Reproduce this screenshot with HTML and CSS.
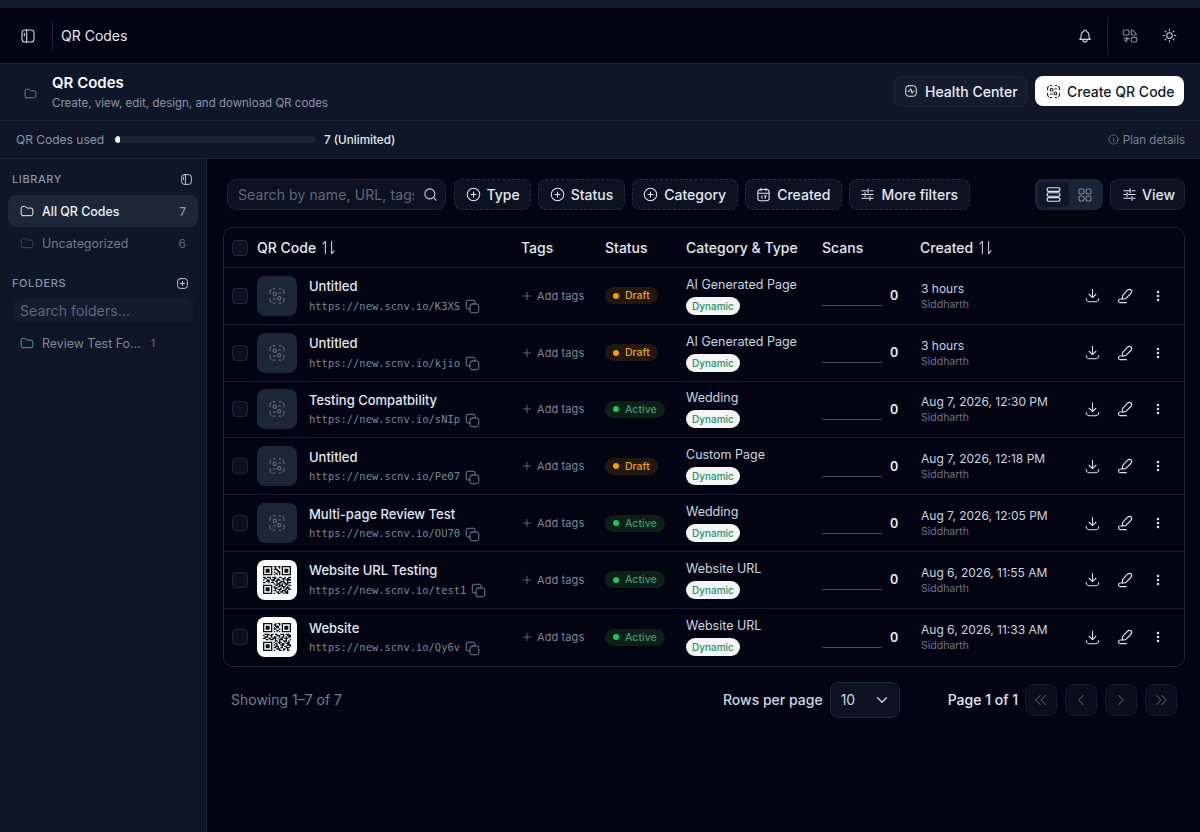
FILE: index.html
```html
<!DOCTYPE html>
<html lang="en">
<head>
<meta charset="utf-8">
<title>QR Codes</title>
<link rel="stylesheet" href="styles.css">
</head>
<body>
<svg class="defs" width="0" height="0" aria-hidden="true">
  <defs>
    <symbol id="i-panel" viewBox="0 0 24 24"><rect x="3" y="3" width="18" height="18" rx="5"/><path d="M10 3v18M6.500 8v4"/></symbol>
    <symbol id="i-folder" viewBox="0 0 24 24"><path d="M5 20h14a3 3 0 0 0 3-3V10a3 3 0 0 0-3-3h-7L9.600 4.600A2 2 0 0 0 8.200 4H5a3 3 0 0 0-3 3v10a3 3 0 0 0 3 3z"/></symbol>
    <symbol id="i-bell" viewBox="0 0 24 24"><path d="M10 5a2 2 0 1 1 4 0 7 7 0 0 1 4 6v3a4 4 0 0 0 2 3H4a4 4 0 0 0 2-3v-3a7 7 0 0 1 4-6"/><path d="M9 17v1a3 3 0 0 0 6 0v-1"/></symbol>
    <symbol id="i-lang" viewBox="0 0 24 24"><path d="M4 3h5a1.500 1.500 0 0 1 1.500 1.500V9A1.500 1.500 0 0 1 9 10.500H3.500A1.500 1.500 0 0 1 2 9V5a2 2 0 0 1 2-2z"/><path d="M14 3c3 .5 6 3 7.500 7.500H14z"/><path d="M7 13.500V21M3 15.500h8M4 19l6-3"/><rect x="14" y="14" width="8" height="7" rx="2"/></symbol>
    <symbol id="i-sun" viewBox="0 0 24 24"><circle cx="12" cy="12" r="4.500"/><path d="M12 2v2M12 20v2M4.900 4.900l1.400 1.400M17.700 17.700l1.400 1.400M2 12h2M20 12h2M4.900 19.100l1.400-1.400M17.700 6.300l1.400-1.400"/></symbol>
    <symbol id="i-pulse" viewBox="0 0 24 24"><rect x="3" y="3" width="18" height="18" rx="5"/><path d="M7 12.500h2.500l2-4.500 2.500 8 1.500-3.500H17"/></symbol>
    <symbol id="i-scan" viewBox="0 0 24 24"><path d="M2.500 9V7a4.500 4.500 0 0 1 1.500-3.300M7 2.500h2M15 2.500h2M20 3.700A4.500 4.500 0 0 1 21.500 7v2M21.500 15v2a4.500 4.500 0 0 1-1.500 3.300M17 21.500h-2M9 21.500H7M4 20.300A4.500 4.500 0 0 1 2.500 17v-2"/><circle cx="9" cy="9" r="2.200"/><circle cx="15" cy="15" r="2.200"/><path d="M14 8h3M7 16h3"/></symbol>
    <symbol id="i-plusc" viewBox="0 0 24 24"><circle cx="12" cy="12" r="10"/><path d="M12 8v8M8 12h8"/></symbol>
    <symbol id="i-plusb" viewBox="0 0 24 24"><rect x="3" y="3" width="18" height="18" rx="5"/><path d="M12 8v8M8 12h8"/></symbol>
    <symbol id="i-cal" viewBox="0 0 24 24"><rect x="3" y="4" width="18" height="18" rx="4"/><path d="M3 10h18M8 2v4M16 2v4M9.500 14v4M13.500 14h2.500l-1.500 4"/></symbol>
    <symbol id="i-sliders" viewBox="0 0 24 24"><path d="M3 6h9M16 6h5M3 12h3M10 12h11M3 18h11M18 18h3M13 3v6M8 9v6M16 15v6"/></symbol>
    <symbol id="i-search" viewBox="0 0 24 24"><circle cx="11" cy="11" r="8"/><path d="M21 21l-4.300-4.300"/></symbol>
    <symbol id="i-rows" viewBox="0 0 24 24"><rect x="3" y="2.500" width="18" height="5" rx="2"/><rect x="3" y="9.500" width="18" height="5" rx="2"/><rect x="3" y="16.500" width="18" height="5" rx="2"/></symbol>
    <symbol id="i-grid" viewBox="0 0 24 24"><rect x="3" y="3" width="7.500" height="7.500" rx="2.500"/><rect x="13.500" y="3" width="7.500" height="7.500" rx="2.500"/><rect x="3" y="13.500" width="7.500" height="7.500" rx="2.500"/><rect x="13.500" y="13.500" width="7.500" height="7.500" rx="2.500"/></symbol>
    <symbol id="i-sort" viewBox="0 0 24 24"><path d="M7 22V2L3 6.500M17 2v20l4-4.500"/></symbol>
    <symbol id="i-copy" viewBox="0 0 24 24"><rect x="8" y="8" width="14" height="14" rx="3.500"/><path d="M16 8V5a3 3 0 0 0-3-3H5a3 3 0 0 0-3 3v8a3 3 0 0 0 3 3h3"/></symbol>
    <symbol id="i-plus" viewBox="0 0 24 24"><path d="M12 3v18M3 12h18"/></symbol>
    <symbol id="i-download" viewBox="0 0 24 24"><path d="M12 2v13M6.500 10l5.500 5.500 5.500-5.500M2 17c0 2.500 2 5 4.500 5h11c2.500 0 4.500-2.500 4.500-5"/></symbol>
    <symbol id="i-sign" viewBox="0 0 24 24"><path d="M21.500 3c-2-1.500-4.500-1-6 .5L8.500 11 8 16.500l5-.5 7-7c1.500-1.500 2.500-4.500 1.500-6z"/><path d="M8 16.500H5c-3.700 0-3.700 5.500 0 5.500h9"/></symbol>
    <symbol id="i-dots" viewBox="0 0 24 24"><circle cx="12" cy="5" r="1"/><circle cx="12" cy="12" r="1"/><circle cx="12" cy="19" r="1"/></symbol>
    <symbol id="i-down" viewBox="0 0 24 24"><path d="M6 9l6 6 6-6"/></symbol>
    <symbol id="i-left" viewBox="0 0 24 24"><path d="M15 6l-6 6 6 6"/></symbol>
    <symbol id="i-right" viewBox="0 0 24 24"><path d="M9 6l6 6-6 6"/></symbol>
    <symbol id="i-dleft" viewBox="0 0 24 24"><path d="M11 6l-6 6 6 6M18 6l-6 6 6 6"/></symbol>
    <symbol id="i-dright" viewBox="0 0 24 24"><path d="M6 6l6 6-6 6M13 6l6 6-6 6"/></symbol>
    <symbol id="i-info" viewBox="0 0 24 24"><circle cx="12" cy="12" r="10"/><path d="M12 16v-5M12 8h.01"/></symbol>
    <symbol id="qr-a" viewBox="0 0 21 21"><path class="qr-fill" fill-rule="evenodd" d="M0 0h7v7H0zM1 1v5h5V1zM2 2h3v3H2zM14 0h7v7h-7zM15 1v5h5V1zM16 2h3v3h-3zM0 14h7v7H0zM1 15v5h5v-5zM2 16h3v3H2z"/><path class="qr-line" d="M8 .5h2M11 .5h2M9 1.500h1M12 1.500h1M8 2.500h3M10 3.500h2M8 4.500h1M11 4.500h2M9 5.500h2M12 5.500h1M8 6.500h1M10 6.500h1M12 6.500h1M0 8.500h2M3 8.500h3M7 8.500h3M12 8.500h2M16 8.500h1M19 8.500h2M1 9.500h2M5 9.500h1M8 9.500h2M11 9.500h1M14 9.500h3M18 9.500h2M0 10.500h1M3 10.500h2M6 10.500h3M10 10.500h3M15 10.500h1M17 10.500h4M2 11.500h3M7 11.500h1M9 11.500h2M13 11.500h3M18 11.500h1M0 12.500h2M4 12.500h1M6 12.500h2M10 12.500h1M12 12.500h2M15 12.500h2M18 12.500h3M8 13.500h1M10 13.500h3M14 13.500h1M16 13.500h3M9 14.500h2M12 14.500h3M17 14.500h1M19 14.500h2M8 15.500h1M11 15.500h2M14 15.500h3M18 15.500h1M8 16.500h3M13 16.500h1M15 16.500h1M17 16.500h3M9 17.500h1M11 17.500h3M16 17.500h2M19 17.500h2M8 18.500h2M12 18.500h1M14 18.500h3M18 18.500h1M10 19.500h2M13 19.500h2M16 19.500h3M8 20.500h1M11 20.500h2M15 20.500h1M17 20.500h2"/></symbol>
    <symbol id="qr-b" viewBox="0 0 21 21"><path class="qr-fill" fill-rule="evenodd" d="M0 0h7v7H0zM1 1v5h5V1zM2 2h3v3H2zM14 0h7v7h-7zM15 1v5h5V1zM16 2h3v3h-3zM0 14h7v7H0zM1 15v5h5v-5zM2 16h3v3H2z"/><path class="qr-line" d="M9 .5h1M11 .5h2M8 1.500h2M12 1.500h1M9 2.500h3M8 3.500h1M10 3.500h2M8 4.500h2M12 4.500h1M10 5.500h2M8 6.500h1M10 6.500h1M12 6.500h1M1 8.500h4M6 8.500h2M9 8.500h2M13 8.500h3M17 8.500h3M0 9.500h1M3 9.500h1M5 9.500h2M10 9.500h3M15 9.500h1M18 9.500h3M1 10.500h3M6 10.500h1M8 10.500h2M12 10.500h1M14 10.500h2M17 10.500h1M19 10.500h2M0 11.500h2M4 11.500h2M7 11.500h3M11 11.500h1M13 11.500h2M16 11.500h3M2 12.500h2M5 12.500h3M9 12.500h1M12 12.500h3M17 12.500h1M20 12.500h1M9 13.500h2M12 13.500h1M15 13.500h3M19 13.500h1M8 14.500h1M11 14.500h3M16 14.500h1M18 14.500h2M9 15.500h2M12 15.500h1M14 15.500h2M17 15.500h3M8 16.500h1M10 16.500h1M13 16.500h3M18 16.500h3M9 17.500h3M14 17.500h1M16 17.500h2M20 17.500h1M8 18.500h2M11 18.500h1M13 18.500h2M17 18.500h3M10 19.500h3M15 19.500h2M18 19.500h1M8 20.500h1M12 20.500h2M15 20.500h1M18 20.500h2"/></symbol>
  </defs>
</svg>

<div class="app">
  <div class="strip"></div>
  <header class="topbar">
    <div class="topbar-left">
      <svg class="ic ic-16 c-soft"><use href="#i-panel"/></svg>
      <span class="vdiv"></span>
      <span class="crumb">QR Codes</span>
    </div>
    <div class="topbar-right">
      <svg class="ic ic-16 c-soft"><use href="#i-bell"/></svg>
      <span class="vdiv"></span>
      <svg class="ic ic-16 c-mid"><use href="#i-lang"/></svg>
      <svg class="ic ic-15 c-soft"><use href="#i-sun"/></svg>
    </div>
  </header>

  <section class="pagehead">
    <div class="pagehead-left">
      <svg class="ic ic-13 c-mid"><use href="#i-folder"/></svg>
      <div class="titles">
        <h1>QR Codes</h1>
        <p>Create, view, edit, design, and download QR codes</p>
      </div>
    </div>
    <div class="pagehead-right">
      <button class="btn btn-ghost"><svg class="ic ic-14"><use href="#i-pulse"/></svg>Health Center</button>
      <button class="btn btn-primary"><svg class="ic ic-15"><use href="#i-scan"/></svg>Create QR Code</button>
    </div>
  </section>

  <section class="usage">
    <div class="usage-left">
      <span class="usage-label">QR Codes used</span>
      <div class="meter"><div class="meter-fill"></div></div>
      <span class="usage-val">7 (Unlimited)</span>
    </div>
    <span class="plan"><svg class="ic ic-11"><use href="#i-info"/></svg>Plan details</span>
  </section>

  <div class="body">
    <aside class="sidebar">
      <div class="side-head"><span>LIBRARY</span><svg class="ic ic-13 c-soft"><use href="#i-panel"/></svg></div>
      <div class="side-item active"><svg class="ic ic-14"><use href="#i-folder"/></svg><span class="side-name">All QR Codes</span><span class="side-count">7</span></div>
      <div class="side-item muted"><svg class="ic ic-14"><use href="#i-folder"/></svg><span class="side-name">Uncategorized</span><span class="side-count">6</span></div>
      <div class="side-head side-head-2"><span>FOLDERS</span><svg class="ic ic-13 c-soft"><use href="#i-plusb"/></svg></div>
      <div class="side-search">Search folders...</div>
      <div class="side-item folder"><svg class="ic ic-14 c-teal"><use href="#i-folder"/></svg><span class="side-name">Review Test Fo...</span><span class="side-num">1</span></div>
    </aside>

    <main class="main">
      <div class="toolbar">
        <div class="search"><input class="search-input" type="text" placeholder="Search by name, URL, tags"><svg class="ic ic-15 c-soft"><use href="#i-search"/></svg></div>
        <button class="filter"><svg class="ic ic-15"><use href="#i-plusc"/></svg>Type</button>
        <button class="filter"><svg class="ic ic-15"><use href="#i-plusc"/></svg>Status</button>
        <button class="filter"><svg class="ic ic-15"><use href="#i-plusc"/></svg>Category</button>
        <button class="filter"><svg class="ic ic-15"><use href="#i-cal"/></svg>Created</button>
        <button class="filter"><svg class="ic ic-15"><use href="#i-sliders"/></svg>More filters</button>
        <div class="toolbar-right">
          <div class="toggle">
            <span class="toggle-on"><svg class="ic ic-17"><use href="#i-rows"/></svg></span>
            <span class="toggle-off"><svg class="ic ic-16"><use href="#i-grid"/></svg></span>
          </div>
          <button class="view"><svg class="ic ic-15"><use href="#i-sliders"/></svg>View</button>
        </div>
      </div>

      <div class="table">
        <div class="row head">
          <div class="cell-cb"><span class="cb cb-head"></span></div>
          <div class="th">QR Code<svg class="ic ic-15"><use href="#i-sort"/></svg></div>
          <div class="th">Tags</div>
          <div class="th">Status</div>
          <div class="th">Category &amp; Type</div>
          <div class="th">Scans</div>
          <div class="th">Created<svg class="ic ic-15"><use href="#i-sort"/></svg></div>
          <div></div>
        </div>

        <div class="row">
          <div class="cell-cb"><span class="cb"></span></div>
          <div class="qr-cell"><span class="thumb"><svg class="ic ic-18"><use href="#i-scan"/></svg></span><div class="qr-text"><div class="name">Untitled</div><div class="url"><span>https://new.scnv.io/K3XS</span><svg class="ic ic-15 c-mid"><use href="#i-copy"/></svg></div></div></div>
          <div class="tags"><svg class="ic ic-10"><use href="#i-plus"/></svg>Add tags</div>
          <div><span class="pill draft"><i></i>Draft</span></div>
          <div class="cat"><div>AI Generated Page</div><span class="dyn">Dynamic</span></div>
          <div class="scans"><span class="spark"></span><b>0</b></div>
          <div class="created"><div>3 hours</div><small>Siddharth</small></div>
          <div class="actions"><svg class="ic ic-15"><use href="#i-download"/></svg><svg class="ic ic-16"><use href="#i-sign"/></svg><svg class="ic ic-14"><use href="#i-dots"/></svg></div>
        </div>

        <div class="row">
          <div class="cell-cb"><span class="cb"></span></div>
          <div class="qr-cell"><span class="thumb"><svg class="ic ic-18"><use href="#i-scan"/></svg></span><div class="qr-text"><div class="name">Untitled</div><div class="url"><span>https://new.scnv.io/kjio</span><svg class="ic ic-15 c-mid"><use href="#i-copy"/></svg></div></div></div>
          <div class="tags"><svg class="ic ic-10"><use href="#i-plus"/></svg>Add tags</div>
          <div><span class="pill draft"><i></i>Draft</span></div>
          <div class="cat"><div>AI Generated Page</div><span class="dyn">Dynamic</span></div>
          <div class="scans"><span class="spark"></span><b>0</b></div>
          <div class="created"><div>3 hours</div><small>Siddharth</small></div>
          <div class="actions"><svg class="ic ic-15"><use href="#i-download"/></svg><svg class="ic ic-16"><use href="#i-sign"/></svg><svg class="ic ic-14"><use href="#i-dots"/></svg></div>
        </div>

        <div class="row">
          <div class="cell-cb"><span class="cb"></span></div>
          <div class="qr-cell"><span class="thumb"><svg class="ic ic-18"><use href="#i-scan"/></svg></span><div class="qr-text"><div class="name">Testing Compatbility</div><div class="url"><span>https://new.scnv.io/sNIp</span><svg class="ic ic-15 c-mid"><use href="#i-copy"/></svg></div></div></div>
          <div class="tags"><svg class="ic ic-10"><use href="#i-plus"/></svg>Add tags</div>
          <div><span class="pill active-pill"><i></i>Active</span></div>
          <div class="cat"><div>Wedding</div><span class="dyn">Dynamic</span></div>
          <div class="scans"><span class="spark"></span><b>0</b></div>
          <div class="created"><div>Aug 7, 2026, 12:30 PM</div><small>Siddharth</small></div>
          <div class="actions"><svg class="ic ic-15"><use href="#i-download"/></svg><svg class="ic ic-16"><use href="#i-sign"/></svg><svg class="ic ic-14"><use href="#i-dots"/></svg></div>
        </div>

        <div class="row">
          <div class="cell-cb"><span class="cb"></span></div>
          <div class="qr-cell"><span class="thumb"><svg class="ic ic-18"><use href="#i-scan"/></svg></span><div class="qr-text"><div class="name">Untitled</div><div class="url"><span>https://new.scnv.io/Pe07</span><svg class="ic ic-15 c-mid"><use href="#i-copy"/></svg></div></div></div>
          <div class="tags"><svg class="ic ic-10"><use href="#i-plus"/></svg>Add tags</div>
          <div><span class="pill draft"><i></i>Draft</span></div>
          <div class="cat"><div>Custom Page</div><span class="dyn">Dynamic</span></div>
          <div class="scans"><span class="spark"></span><b>0</b></div>
          <div class="created"><div>Aug 7, 2026, 12:18 PM</div><small>Siddharth</small></div>
          <div class="actions"><svg class="ic ic-15"><use href="#i-download"/></svg><svg class="ic ic-16"><use href="#i-sign"/></svg><svg class="ic ic-14"><use href="#i-dots"/></svg></div>
        </div>

        <div class="row">
          <div class="cell-cb"><span class="cb"></span></div>
          <div class="qr-cell"><span class="thumb"><svg class="ic ic-18"><use href="#i-scan"/></svg></span><div class="qr-text"><div class="name">Multi-page Review Test</div><div class="url"><span>https://new.scnv.io/OU70</span><svg class="ic ic-15 c-mid"><use href="#i-copy"/></svg></div></div></div>
          <div class="tags"><svg class="ic ic-10"><use href="#i-plus"/></svg>Add tags</div>
          <div><span class="pill active-pill"><i></i>Active</span></div>
          <div class="cat"><div>Wedding</div><span class="dyn">Dynamic</span></div>
          <div class="scans"><span class="spark"></span><b>0</b></div>
          <div class="created"><div>Aug 7, 2026, 12:05 PM</div><small>Siddharth</small></div>
          <div class="actions"><svg class="ic ic-15"><use href="#i-download"/></svg><svg class="ic ic-16"><use href="#i-sign"/></svg><svg class="ic ic-14"><use href="#i-dots"/></svg></div>
        </div>

        <div class="row">
          <div class="cell-cb"><span class="cb"></span></div>
          <div class="qr-cell"><span class="thumb thumb-qr"><svg class="qr"><use href="#qr-a"/></svg></span><div class="qr-text"><div class="name">Website URL Testing</div><div class="url"><span>https://new.scnv.io/test1</span><svg class="ic ic-15 c-mid"><use href="#i-copy"/></svg></div></div></div>
          <div class="tags"><svg class="ic ic-10"><use href="#i-plus"/></svg>Add tags</div>
          <div><span class="pill active-pill"><i></i>Active</span></div>
          <div class="cat"><div>Website URL</div><span class="dyn">Dynamic</span></div>
          <div class="scans"><span class="spark"></span><b>0</b></div>
          <div class="created"><div>Aug 6, 2026, 11:55 AM</div><small>Siddharth</small></div>
          <div class="actions"><svg class="ic ic-15"><use href="#i-download"/></svg><svg class="ic ic-16"><use href="#i-sign"/></svg><svg class="ic ic-14"><use href="#i-dots"/></svg></div>
        </div>

        <div class="row last">
          <div class="cell-cb"><span class="cb"></span></div>
          <div class="qr-cell"><span class="thumb thumb-qr"><svg class="qr"><use href="#qr-b"/></svg></span><div class="qr-text"><div class="name">Website</div><div class="url"><span>https://new.scnv.io/Qy6v</span><svg class="ic ic-15 c-mid"><use href="#i-copy"/></svg></div></div></div>
          <div class="tags"><svg class="ic ic-10"><use href="#i-plus"/></svg>Add tags</div>
          <div><span class="pill active-pill"><i></i>Active</span></div>
          <div class="cat"><div>Website URL</div><span class="dyn">Dynamic</span></div>
          <div class="scans"><span class="spark"></span><b>0</b></div>
          <div class="created"><div>Aug 6, 2026, 11:33 AM</div><small>Siddharth</small></div>
          <div class="actions"><svg class="ic ic-15"><use href="#i-download"/></svg><svg class="ic ic-16"><use href="#i-sign"/></svg><svg class="ic ic-14"><use href="#i-dots"/></svg></div>
        </div>
      </div>

      <div class="pager">
        <span class="showing">Showing 1–7 of 7</span>
        <div class="pager-right">
          <span class="rows-label">Rows per page</span>
          <div class="select"><span>10</span><svg class="ic ic-18 c-soft"><use href="#i-down"/></svg></div>
          <span class="page-label">Page 1 of 1</span>
          <div class="page-btns">
            <span class="page-btn"><svg class="ic ic-18"><use href="#i-dleft"/></svg></span>
            <span class="page-btn"><svg class="ic ic-18"><use href="#i-left"/></svg></span>
            <span class="page-btn"><svg class="ic ic-18"><use href="#i-right"/></svg></span>
            <span class="page-btn"><svg class="ic ic-18"><use href="#i-dright"/></svg></span>
          </div>
        </div>
      </div>
    </main>
  </div>
</div>
</body>
</html>
```

FILE: styles.css
```css
* { box-sizing: border-box; }
html, body { margin: 0; height: 100%; }
body {
  background: #020412;
  color: #f1f5f9;
  font-family: Inter, "Noto Sans", "Liberation Sans", sans-serif;
  overflow: hidden;
}
button { font: inherit; color: inherit; cursor: pointer; white-space: nowrap; }
h1, p { margin: 0; }
.defs { position: absolute; }

.ic {
  fill: none;
  stroke: currentColor;
  stroke-width: 1.7;
  stroke-linecap: round;
  stroke-linejoin: round;
  flex: none;
  display: block;
}
.ic-10 { width: 10px; height: 10px; }
.ic-11 { width: 11px; height: 11px; }
.ic-13 { width: 13px; height: 13px; }
.ic-14 { width: 14px; height: 14px; }
.ic-15 { width: 15px; height: 15px; }
.ic-16 { width: 16px; height: 16px; }
.ic-17 { width: 17px; height: 17px; }
.ic-18 { width: 18px; height: 18px; }
.c-soft { color: #cbd5e1; }
.c-mid { color: #7c8698; }
.c-teal { color: #4c9f8c; }

.app { height: 100vh; display: flex; flex-direction: column; }
.strip { height: 8px; background: #151c2e; flex: none; }

.topbar {
  height: 56px;
  flex: none;
  display: flex;
  align-items: center;
  justify-content: space-between;
  background: #020412;
  border-bottom: 1px solid #1a2233;
  padding: 0 23px 0 20px;
}
.topbar-left, .topbar-right { display: flex; align-items: center; }
.topbar-left .vdiv { margin: 0 8px 0 16px; }
.vdiv { width: 1px; height: 32px; background: #1a2233; display: block; }
.crumb { font-size: 14px; color: #e2e8f0; }
.topbar-right .vdiv { margin: 0 14px 0 14px; height: 36px; }
.topbar-right .ic-15 { margin-left: 24px; }

.pagehead {
  height: 57px;
  flex: none;
  background: #0f1628;
  border-bottom: 1px solid #1a2233;
  display: flex;
  align-items: center;
  justify-content: space-between;
  padding: 0 16px 0 24px;
}
.pagehead-left { display: flex; align-items: center; gap: 15px; }
.pagehead-left .ic { margin-top: 2px; }
.titles h1 { font-size: 15px; line-height: 20px; font-weight: 600; color: #f8fafc; }
.titles p { font-size: 11.500px; line-height: 18px; color: #8a94a6; margin-top: 1px; }
.pagehead-right { display: flex; align-items: center; gap: 7px; padding-bottom: 2px; }
.btn {
  height: 31px;
  display: flex;
  align-items: center;
  gap: 7px;
  font-size: 14px;
  font-weight: 500;
  border-radius: 8px;
  padding: 0 10px;
}
.btn-ghost { background: #151c2e; border: 1px solid #1a2233; color: #e8edf4; width: 135px; }
.btn-primary { background: #fff; border: 0; color: #0f172a; width: 149px; height: 30px; padding: 0 11px; gap: 6px; }

.usage {
  height: 38px;
  flex: none;
  background: #0f1628;
  border-bottom: 1px solid #1a2233;
  display: flex;
  align-items: center;
  justify-content: space-between;
  padding: 0 15px 0 16px;
  font-size: 12px;
}
.usage-left { display: flex; align-items: center; }
.usage-label { color: #8a94a6; width: 99px; }
.meter { width: 200px; height: 7px; background: #1b2436; border-radius: 4px; overflow: hidden; }
.meter-fill { width: 5px; height: 100%; background: #fff; border-radius: 3px; }
.usage-val { margin-left: 9px; color: #e2e8f0; font-size: 11.700px; font-weight: 500; }
.plan { display: flex; align-items: center; gap: 4px; color: #77818f; font-size: 11.500px; }

.body { flex: 1; display: flex; min-height: 0; }

.sidebar {
  width: 207px;
  flex: none;
  background: #0f1628;
  border-right: 1px solid #1a2233;
  padding: 12px 8px 0;
}
.side-head {
  display: flex;
  align-items: center;
  justify-content: space-between;
  font-size: 11px;
  font-weight: 500;
  letter-spacing: .6px;
  color: #8a94a6;
  padding: 0 5px 0 4px;
  height: 16px;
}
.side-head-2 { margin-top: 16px; padding-right: 9px; }
.side-item {
  height: 32px;
  display: flex;
  align-items: center;
  font-size: 12.400px;
  border-radius: 8px;
  padding: 0 12px;
}
.side-name { margin-left: 8px; flex: 1; }
.side-count { font-size: 12px; color: #8a94a6; }
.active { background: #1d2738; color: #eef2f7; margin-top: 8px; font-weight: 500; }
.muted { color: #707a8b; }
.muted .ic { color: #3a4354; }
.muted .side-count { color: #566072; }
.side-search {
  margin: 8px 4px 0 5px;
  height: 23px;
  line-height: 23px;
  border-radius: 6px;
  background: #141b2d;
  color: #5f697b;
  font-size: 14px;
  padding: 0 7px;
  letter-spacing: .1px;
}
.folder { margin-top: 5px; color: #7e8899; }
.folder .side-name { flex: none; }
.side-num { margin-left: 10px; font-size: 11px; color: #5f697b; }

.main { flex: 1; min-width: 0; padding: 20px 15px 0 16px; }

.toolbar { display: flex; align-items: center; gap: 7px; padding-left: 4px; height: 31px; }
.search {
  width: 219px;
  height: 31px;
  display: flex;
  align-items: center;
  justify-content: space-between;
  background: #0d1220;
  border: 1px solid #1c2435;
  border-radius: 9px;
  padding: 0 7px 0 10px;
  margin-right: 1px;
}
.search-input {
  width: 176px;
  background: transparent;
  border: 0;
  outline: 0;
  padding: 0;
  font-family: inherit;
  font-size: 14px;
  letter-spacing: .1px;
  color: #e2e8f0;
}
.search-input::placeholder { color: #5f697b; opacity: 1; }
.filter {
  height: 31px;
  display: flex;
  align-items: center;
  gap: 6px;
  background: #0d1220;
  border: 1px dashed #252e40;
  border-radius: 8px;
  padding: 0 10.500px;
  font-size: 14px;
  font-weight: 500;
  color: #e2e8f0;
}
.toolbar-right { margin-left: auto; display: flex; align-items: center; gap: 7px; }
.toggle {
  width: 68px;
  height: 31px;
  display: flex;
  background: #1b2436;
  border-radius: 8px;
  padding: 3px;
}
.toggle-on, .toggle-off { display: flex; align-items: center; justify-content: center; flex: 1; border-radius: 5px; }
.toggle-on { background: #0f1628; color: #e2e8f0; }
.toggle-off { color: #7c8698; }
.view {
  width: 75px;
  height: 31px;
  display: flex;
  align-items: center;
  gap: 5px;
  background: #0d1220;
  border: 1px solid #1c2435;
  border-radius: 8px;
  padding: 0 11px;
  font-size: 14px;
  font-weight: 500;
  color: #e2e8f0;
}

.table { margin-top: 17px; border: 1px solid #1c2435; border-radius: 10px; }
.row {
  height: 56.800px;
  display: grid;
  grid-template-columns: 33px 264px 84px 81px 136px 98px 155px 1fr;
  align-items: center;
  border-bottom: 1px solid #161d2e;
}
.row.last { border-bottom: 0; }
.row.head { height: 40px; border-bottom: 1px solid #1c2435; }
.cell-cb { padding-left: 8px; display: flex; }
.cb { width: 16px; height: 16px; border: 1px solid #1e2738; border-radius: 4px; background: #0b101c; display: block; }
.cb-head { background: #0d1220; border-color: #232c3e; }
.th { display: flex; align-items: center; gap: 5px; font-size: 14px; font-weight: 500; color: #e2e8f0; }
.th .ic { color: #cbd5e1; stroke-width: 1.700; }

.qr-cell { display: flex; align-items: center; gap: 12px; }
.thumb {
  width: 40px;
  height: 40px;
  border-radius: 8px;
  background: #1d2636;
  color: #5f697b;
  display: flex;
  align-items: center;
  justify-content: center;
  flex: none;
}
.thumb .ic { stroke-width: 1.500; }
.thumb-qr { background: #fff; }
.qr { width: 28px; height: 28px; display: block; }
.qr-fill { fill: #0b0f18; stroke: none; }
.qr-line { fill: none; stroke: #0b0f18; stroke-width: 1; }
.qr-text { min-width: 0; }
.name { font-size: 13px; line-height: 18px; font-weight: 500; color: #e2e8f0; }
.url {
  display: flex;
  align-items: center;
  gap: 5px;
  margin-top: 2px;
  font-family: "DejaVu Sans Mono", "Liberation Mono", monospace;
  font-size: 10.460px;
  color: #7c8698;
}
.url .ic { margin-top: 2px; stroke-width: 1.5; }

.tags { display: flex; align-items: center; gap: 5px; font-size: 11px; color: #7c8698; padding-left: 1px; letter-spacing: .1px; }
.pill {
  display: flex;
  width: fit-content;
  align-items: center;
  gap: 6px;
  height: 17px;
  padding: 0 8px;
  border-radius: 9px;
  font-size: 10.500px;
  font-weight: 500;
}
.pill i { width: 6px; height: 6px; border-radius: 50%; display: block; background: currentColor; }
.draft { background: #21180f; color: #e7a42b; }
.draft i { background: #f59e0b; }
.active-pill { background: #0c2019; color: #3f9a72; }
.active-pill i { background: #22c55e; }

.cat { font-size: 12.500px; color: #cbd5e1; line-height: 16px; }
.dyn {
  display: block;
  width: fit-content;
  margin-top: 4px;
  height: 18px;
  line-height: 18px;
  padding: 0 6px;
  border-radius: 9px;
  background: #f3f6f4;
  color: #2f8f63;
  font-size: 10px;
  font-weight: 500;
}
.scans { display: flex; align-items: center; gap: 8px; }
.spark { width: 60px; height: 1px; background: #475064; margin-top: 20px; display: block; }
.scans b { font-size: 12.500px; font-weight: 600; color: #e8edf4; }
.created { padding: 2px 0 0 1px; font-size: 12px; line-height: 16px; color: #cbd5e1; }
.created small { display: block; font-size: 10.500px; line-height: 16px; color: #6b7586; }
.actions { display: flex; align-items: center; gap: 17px; padding-left: 10px; color: #dbe2ea; }
.actions .ic-14 { stroke-width: 2.4; margin-left: 1px; }

.pager { display: flex; align-items: center; justify-content: space-between; padding: 15px 8px 0; }
.showing { font-size: 14px; color: #737d8e; }
.pager-right { display: flex; align-items: center; }
.rows-label { font-size: 14px; font-weight: 500; color: #cbd5e1; margin-right: 7px; }
.select {
  width: 70px;
  height: 36px;
  display: flex;
  align-items: center;
  justify-content: space-between;
  background: #0d1220;
  border: 1px solid #1c2435;
  border-radius: 8px;
  padding: 0 8px 0 10px;
  font-size: 14px;
  color: #cbd5e1;
  margin-right: 48px;
}
.page-label { font-size: 14px; font-weight: 500; color: #e2e8f0; margin-right: 7px; }
.page-btns { display: flex; gap: 8px; }
.page-btn {
  width: 32px;
  height: 32px;
  display: flex;
  align-items: center;
  justify-content: center;
  background: #0a0e1a;
  border: 1px solid #141a29;
  border-radius: 8px;
  color: #566072;
}
.page-btn .ic { stroke-width: 1.400; }
```
